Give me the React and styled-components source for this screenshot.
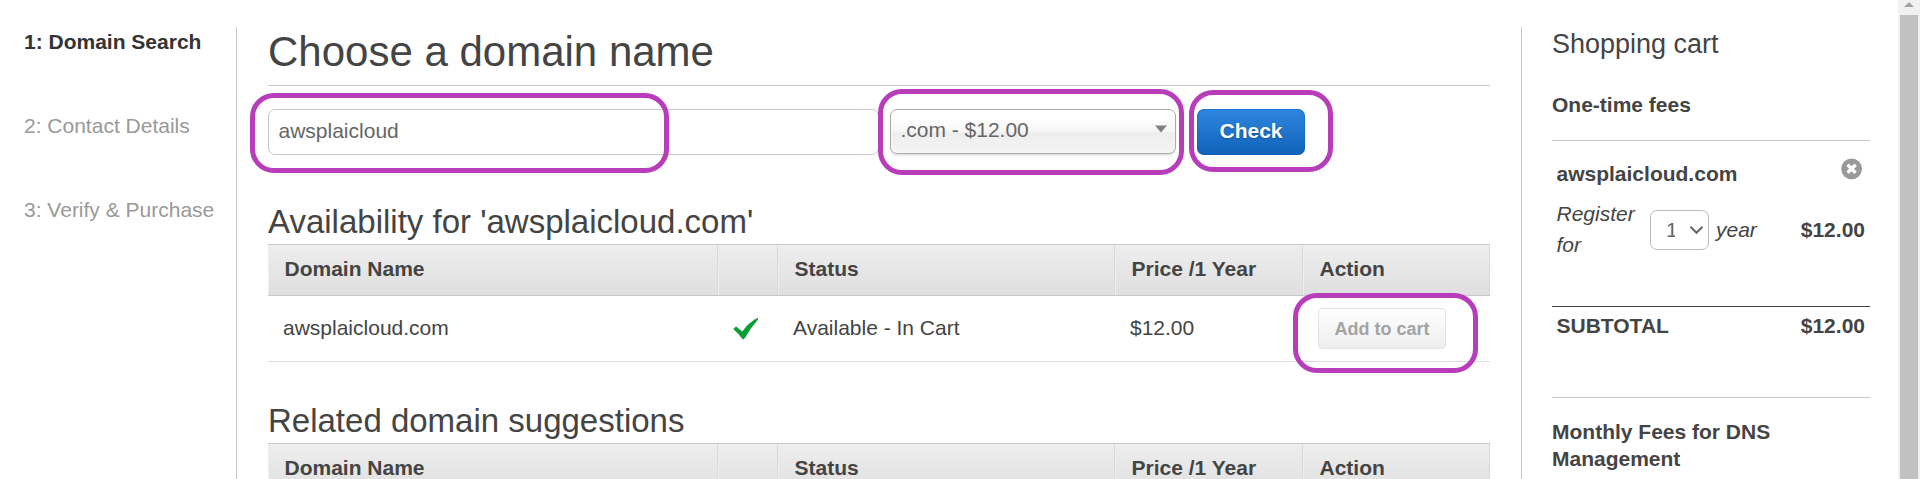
import React from "react";
import styled, { createGlobalStyle, css } from "styled-components";

const GlobalStyle = createGlobalStyle`
  *, *::before, *::after { box-sizing: border-box; }
  html, body { margin: 0; padding: 0; overflow: hidden; background: #fff; }
  body {
    font: 21px/27px "Liberation Sans", Arial, sans-serif;
    color: #444;
  }
`;

const Page = styled.div`
  display: flex;
  height: 479px;
  overflow: hidden;
`;

const Steps = styled.nav`
  flex: 0 0 237px;
  margin-top: 27px;
  padding: 1px 0 0 24px;
  border-right: 1px solid #c8c8c8;
`;

const Step = styled.div`
  height: 84px;
  white-space: nowrap;
  color: ${(p) => (p.$active ? "#333" : "#999")};
  font-weight: ${(p) => (p.$active ? "bold" : "normal")};
`;

const Main = styled.main`
  flex: 0 0 1222px;
  margin: 27px 31px 0;
`;

const PageTitle = styled.h1`
  margin: 0 0 23px;
  height: 59px;
  border-bottom: 1px solid #c8c8c8;
  font-size: 42px;
  line-height: 49px;
  font-weight: normal;
`;

const SearchForm = styled.div`
  display: flex;
  align-items: flex-start;
  height: 46px;
`;

const Callout = styled.span`
  position: absolute;
  z-index: 2;
  top: ${(p) => p.$top}px;
  left: ${(p) => p.$left}px;
  width: ${(p) => p.$width}px;
  height: ${(p) => p.$height}px;
  border: 5px solid #b83dba;
  border-radius: 24px;
  pointer-events: none;
`;

const control = css`
  position: relative;
  border-radius: 7px;
  white-space: nowrap;
`;

const DomainField = styled.div`
  ${control}
  width: 611px;
  height: 46px;
  padding: 7px 9.5px;
  border: 1px solid #c8c8c8;
  color: #666;
`;

const TldSelect = styled.div`
  ${control}
  display: flex;
  justify-content: space-between;
  width: 286px;
  height: 45px;
  margin-left: 11px;
  padding: 6px 8px 0 9.4px;
  border: 1px solid #aaa;
  color: #666;
  background: linear-gradient(#fff 20%, #f6f6f6 50%, #eee 52%, #f4f4f4 100%);
  box-shadow: 0 0 3px #fff inset, 0 2px 2px rgba(0, 0, 0, 0.1);
`;

const DropArrow = styled.svg`
  width: 12px;
  height: 8px;
  margin-top: 9px;
`;

const CheckButton = styled.div`
  ${control}
  width: 108px;
  height: 46px;
  margin-left: 21px;
  padding-top: 8px;
  color: #fff;
  font-weight: bold;
  text-align: center;
  text-shadow: 0 1px 2px rgba(0, 0, 0, 0.3);
  background: linear-gradient(#2f86df, #1062b8);
  box-shadow: 0 0 0 1px rgba(10, 90, 180, 0.35) inset;
`;

const SectionTitle = styled.h2`
  margin: ${(p) => p.$gap}px 0 0;
  height: 41px;
  font-size: 33px;
  line-height: 37px;
  font-weight: normal;
`;

const columns = css`
  display: grid;
  grid-template-columns: 450px 60px 337px 188px 187px;
`;

const HeaderRow = styled.div`
  ${columns}
  height: 52px;
  border: solid #c8c8c8;
  border-width: 1px 0;
  background: linear-gradient(#eee, #dfdfdf);
`;

const HeaderCell = styled.div`
  padding: 10px 0 0 15.5px;
  border-left: 1px solid #eee;
  border-right: 1px solid #d9d9d9;
  font-weight: bold;
`;

const BodyRow = styled.div`
  ${columns}
  height: 66px;
  border-bottom: 1px solid #ddd;
`;

const BodyCell = styled.div`
  padding: ${(p) => p.$top ?? 18}px 0 0 ${(p) => p.$left ?? 15}px;
`;

const AddButton = styled.div`
  position: relative;
  width: 128px;
  height: 41px;
  padding-top: 7px;
  border: 1px solid #e3e3e3;
  border-radius: 4px;
  background: linear-gradient(#fff, #eee);
  color: #a3a3a3;
  font-size: 18px;
  font-weight: bold;
  text-align: center;
`;

const Cart = styled.aside`
  flex: 0 0 349px;
  margin: 27px 28px 0 0;
  padding: 2px 0 0 30px;
  border-left: 1px solid #c8c8c8;
`;

const CartTitle = styled.h2`
  margin: 0;
  height: 62px;
  font-size: 27px;
  line-height: 30px;
  font-weight: normal;
`;

const FeeTitle = styled.div`
  height: ${(p) => p.$height}px;
  font-weight: bold;
`;

const FeeItem = styled.div`
  height: 166px;
  padding: 19px 5px 0 4.5px;
  border-top: 1px solid #c8c8c8;
`;

const ItemName = styled.div`
  display: flex;
  justify-content: space-between;
  height: 38px;
  font-weight: bold;
`;

const RemoveIcon = styled.svg`
  width: 22px;
  height: 22px;
  margin: -2px 2px 0 0;
`;

const Registration = styled.div`
  display: flex;
  align-items: center;
  height: 62px;
  font-style: italic;
  line-height: 31px;
`;

const RegisterLabel = styled.span`
  width: 93.5px;
  padding-right: 10px;
`;

const YearSelect = styled.span`
  display: flex;
  width: 59px;
  height: 40px;
  margin: 2px 7px 0 0;
  padding: 3px 0 0 15px;
  border: 1px solid #bbb;
  border-radius: 7px;
  color: #666;
  font-style: normal;
`;

const YearValue = styled.span`
  width: 9px;
  height: 31px;
  overflow: hidden;
`;

const Chevron = styled.svg`
  width: 16px;
  height: 10px;
  margin: 11px 0 0 14px;
`;

const Amount = styled.strong`
  margin-left: auto;
  font-style: normal;
`;

const Subtotal = styled.div`
  display: flex;
  height: 91px;
  padding: 5px 5px 0 4.5px;
  border-top: 1px solid #444;
  font-weight: bold;
`;

const MonthlyFees = styled.div`
  padding: 20px 60px 0 0;
  border-top: 1px solid #c8c8c8;
  font-weight: bold;
`;

const ScrollTrack = styled.div`
  flex: 0 0 22px;
  padding: 2px 2px 0;
  background: #f1f1f1;
`;

const ScrollUp = styled.svg`
  display: block;
  width: 10px;
  height: 5px;
  margin: 0 auto 8px;
`;

const ScrollThumb = styled.div`
  height: 464px;
  background: #c1c1c1;
`;

function TableHeader() {
  return (
    <HeaderRow>
      {["Domain Name", "", "Status", "Price /1 Year", "Action"].map((label, i) => (
        <HeaderCell key={i}>{label}</HeaderCell>
      ))}
    </HeaderRow>
  );
}

export default function App() {
  return (
    <>
      <GlobalStyle />
      <Page>
        <Steps>
          <Step $active>1: Domain Search</Step>
          <Step>2: Contact Details</Step>
          <Step>3: Verify &amp; Purchase</Step>
        </Steps>
        <Main>
          <PageTitle>Choose a domain name</PageTitle>
          <SearchForm>
            <DomainField>
              awsplaicloud
              <Callout $top={-17} $left={-19} $width={419} $height={80} />
            </DomainField>
            <TldSelect>
              .com - $12.00
              <DropArrow viewBox="0 0 12 8">
                <path d="M0 0.5h12L6 7.5z" fill="#808080" />
              </DropArrow>
              <Callout $top={-21} $left={-13} $width={306} $height={86} />
            </TldSelect>
            <CheckButton>
              Check
              <Callout $top={-19} $left={-8} $width={144} $height={82} />
            </CheckButton>
          </SearchForm>
          <SectionTitle $gap={48}>Availability for 'awsplaicloud.com'</SectionTitle>
          <TableHeader />
          <BodyRow>
            <BodyCell>awsplaicloud.com</BodyCell>
            <BodyCell $top={21}>
              <svg width="26" height="24" viewBox="0 0 26 24">
                <path d="M0.3 12L3 9.6L9.3 14.5Q15.5 5.5 24.8 0.8L25 2.4Q17 11.5 12 21L9.8 22.6Q6 17 0.3 12z" fill="#0a9e34" />
              </svg>
            </BodyCell>
            <BodyCell>Available - In Cart</BodyCell>
            <BodyCell>$12.00</BodyCell>
            <BodyCell $top={12} $left={15}>
              <AddButton>
                Add to cart
                <Callout $top={-16} $left={-26} $width={185} $height={80} />
              </AddButton>
            </BodyCell>
          </BodyRow>
          <SectionTitle $gap={40}>Related domain suggestions</SectionTitle>
          <TableHeader />
        </Main>
        <Cart>
          <CartTitle>Shopping cart</CartTitle>
          <FeeTitle $height={49}>One-time fees</FeeTitle>
          <FeeItem>
            <ItemName>
              awsplaicloud.com
              <RemoveIcon viewBox="0 0 22 22">
                <circle cx="10.6" cy="10.8" r="10.4" fill="#999" />
                <path d="M7.8 8l5.6 5.6M13.4 8l-5.6 5.6" stroke="#fff" strokeWidth="3.4" strokeLinecap="square" />
              </RemoveIcon>
            </ItemName>
            <Registration>
              <RegisterLabel>Register for</RegisterLabel>
              <YearSelect>
                <YearValue>1</YearValue>
                <Chevron viewBox="0 0 16 10">
                  <path d="M1.5 1.8l6 6 6-6" fill="none" stroke="#666" strokeWidth="2" />
                </Chevron>
              </YearSelect>
              year
              <Amount>$12.00</Amount>
            </Registration>
          </FeeItem>
          <Subtotal>
            SUBTOTAL
            <Amount>$12.00</Amount>
          </Subtotal>
          <MonthlyFees>Monthly Fees for DNS Management</MonthlyFees>
        </Cart>
        <ScrollTrack>
          <ScrollUp viewBox="0 0 10 5">
            <path d="M0 5L5 0l5 5z" fill="#a3a3a3" />
          </ScrollUp>
          <ScrollThumb />
        </ScrollTrack>
      </Page>
    </>
  );
}
